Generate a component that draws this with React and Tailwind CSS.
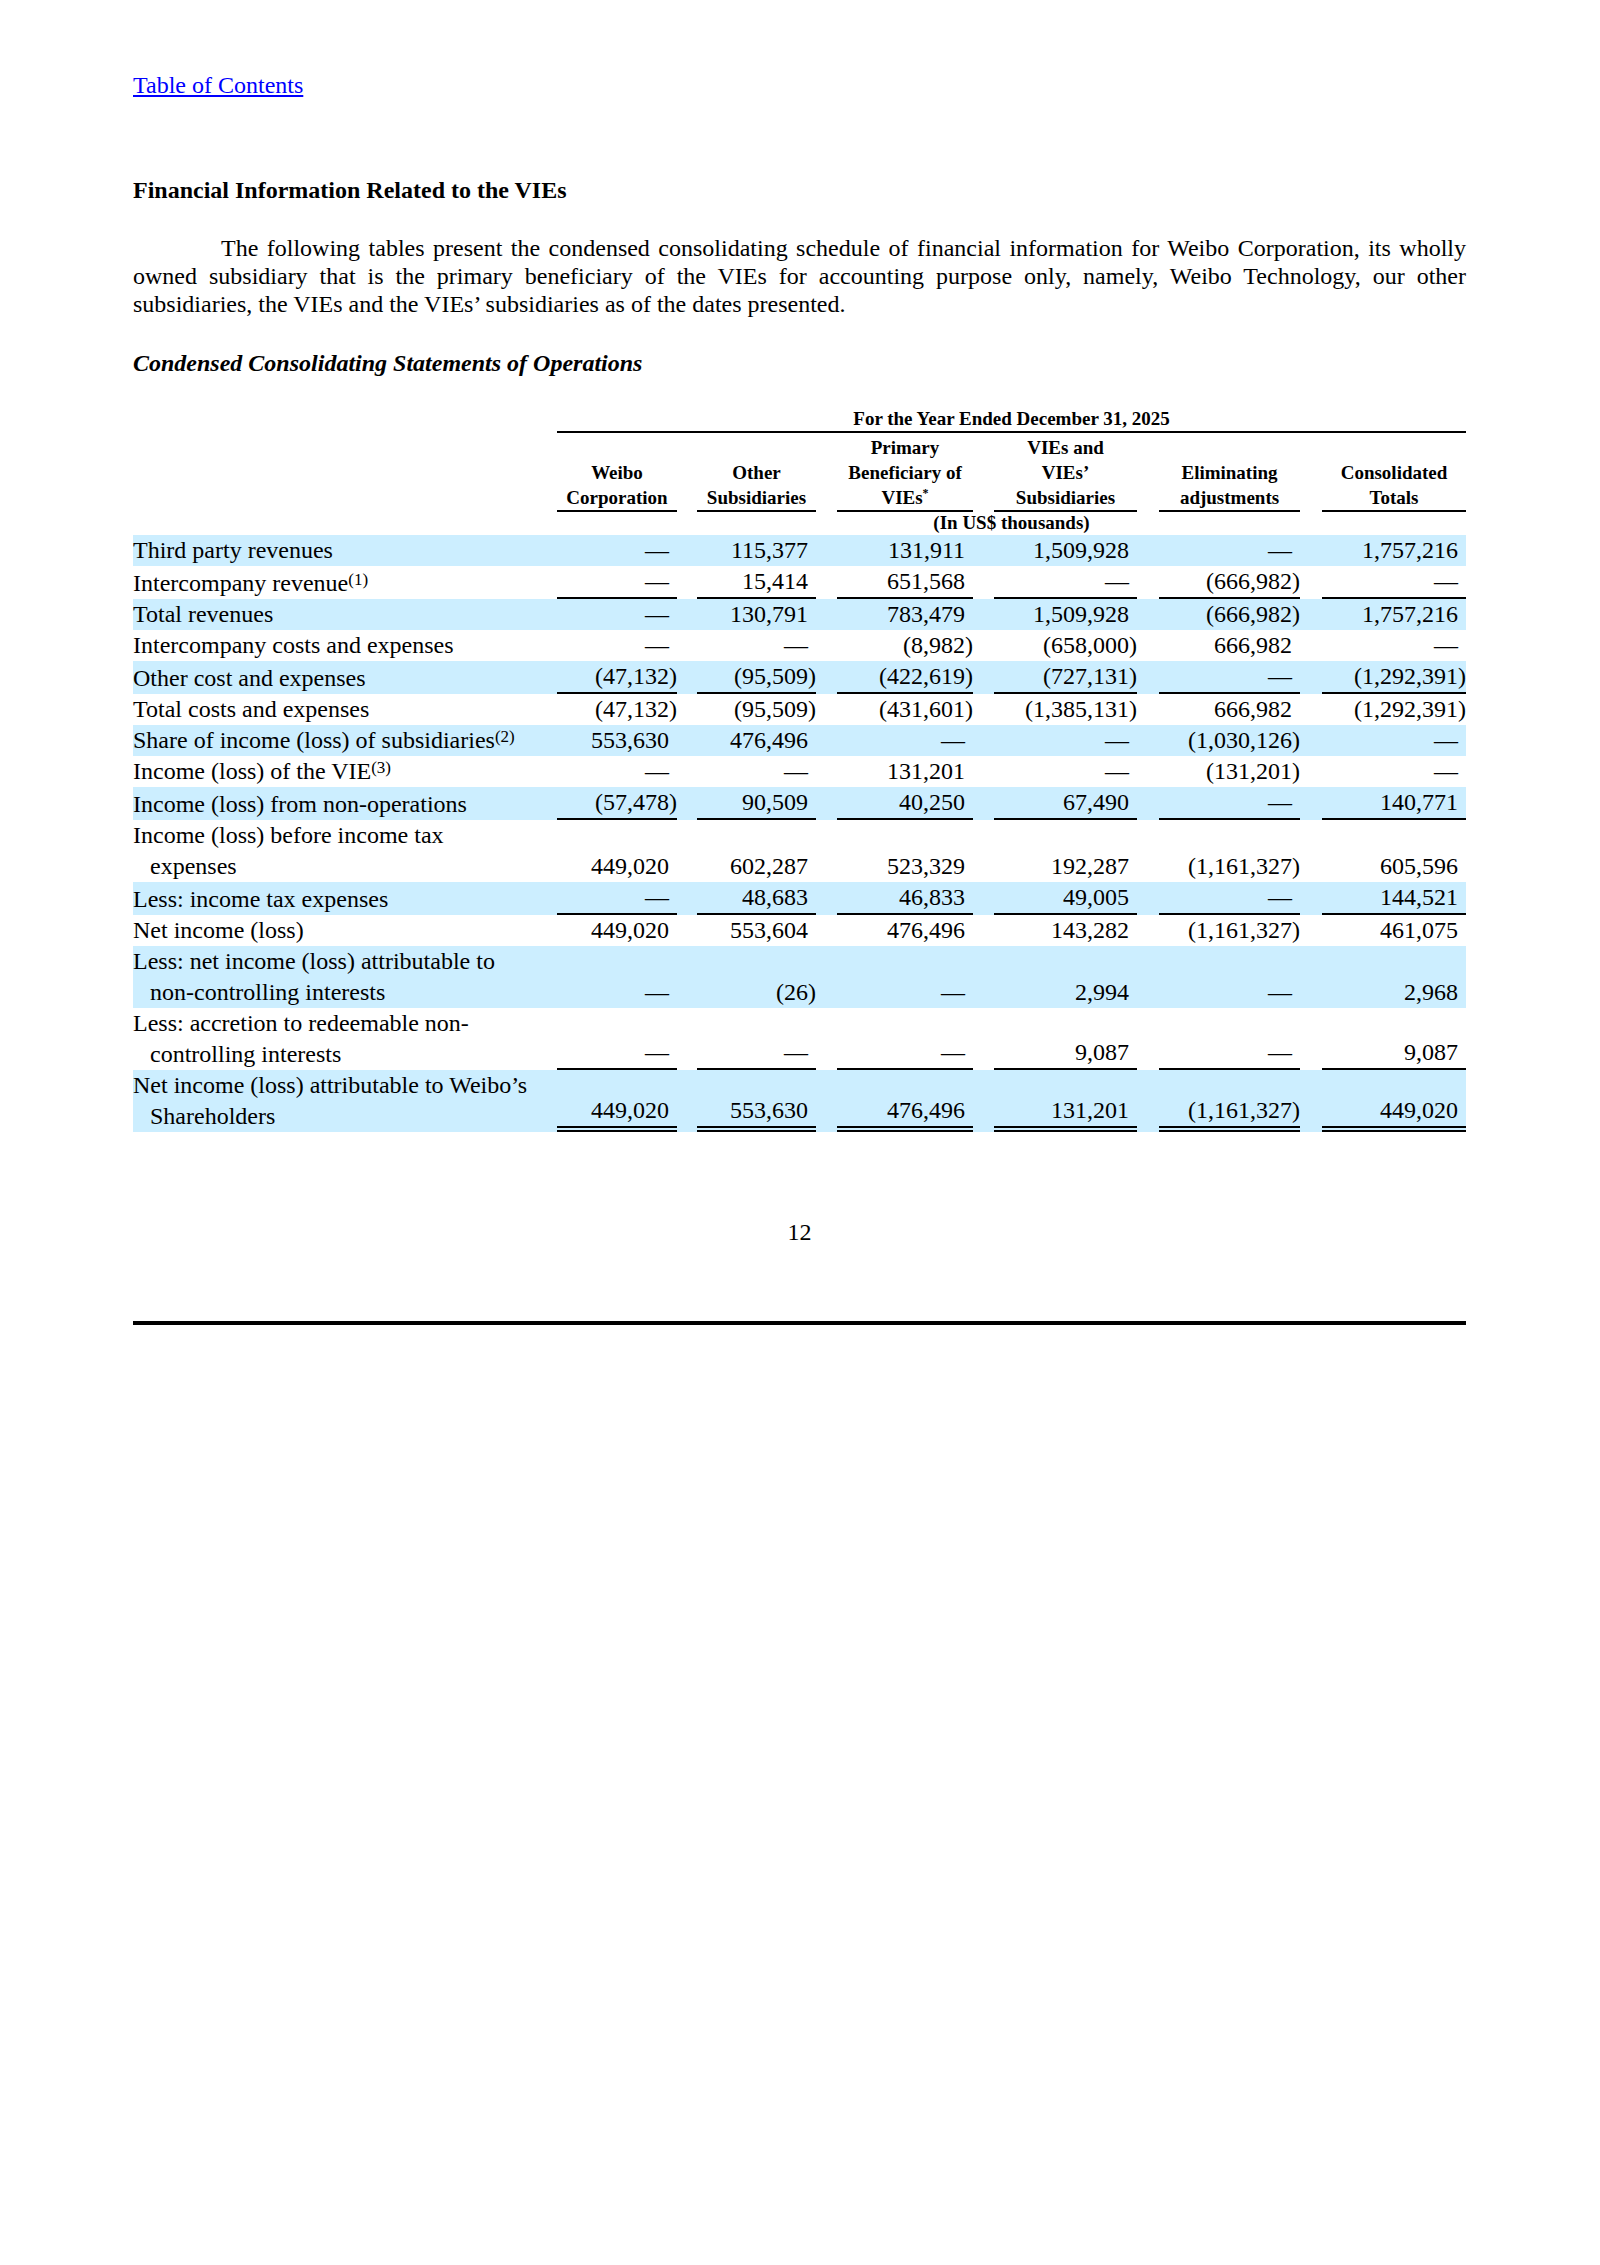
import React from 'react';

const numWidths = ['w-[120px]', 'w-[119px]', 'w-[136px]', 'w-[143px]', 'w-[141px]', 'w-[144px]'];
const gapWidths = ['w-[20px]', 'w-[21px]', 'w-[21px]', 'w-[22px]', 'w-[22px]'];

const headers = [
    ['Weibo', 'Corporation'],
    ['Other', 'Subsidiaries'],
    ['Primary', 'Beneficiary of', 'VIEs*'],
    ['VIEs and', 'VIEs’', 'Subsidiaries'],
    ['Eliminating', 'adjustments'],
    ['Consolidated', 'Totals'],
];

const rows = [
    { label: ['Third party revenues'], band: true, v: ['—', '115,377', '131,911', '1,509,928', '—', '1,757,216'] },
    { label: ['Intercompany revenue'], sup: '(1)', line: 'single', v: ['—', '15,414', '651,568', '—', '(666,982)', '—'] },
    { label: ['Total revenues'], band: true, v: ['—', '130,791', '783,479', '1,509,928', '(666,982)', '1,757,216'] },
    { label: ['Intercompany costs and expenses'], v: ['—', '—', '(8,982)', '(658,000)', '666,982', '—'] },
    { label: ['Other cost and expenses'], band: true, line: 'single', v: ['(47,132)', '(95,509)', '(422,619)', '(727,131)', '—', '(1,292,391)'] },
    { label: ['Total costs and expenses'], v: ['(47,132)', '(95,509)', '(431,601)', '(1,385,131)', '666,982', '(1,292,391)'] },
    { label: ['Share of income (loss) of subsidiaries'], sup: '(2)', band: true, v: ['553,630', '476,496', '—', '—', '(1,030,126)', '—'] },
    { label: ['Income (loss) of the VIE'], sup: '(3)', v: ['—', '—', '131,201', '—', '(131,201)', '—'] },
    { label: ['Income (loss) from non-operations'], band: true, line: 'single', v: ['(57,478)', '90,509', '40,250', '67,490', '—', '140,771'] },
    { label: ['Income (loss) before income tax', 'expenses'], v: ['449,020', '602,287', '523,329', '192,287', '(1,161,327)', '605,596'] },
    { label: ['Less: income tax expenses'], band: true, line: 'single', v: ['—', '48,683', '46,833', '49,005', '—', '144,521'] },
    { label: ['Net income (loss)'], v: ['449,020', '553,604', '476,496', '143,282', '(1,161,327)', '461,075'] },
    { label: ['Less: net income (loss) attributable to', 'non-controlling interests'], band: true, v: ['—', '(26)', '—', '2,994', '—', '2,968'] },
    { label: ['Less: accretion to redeemable non-', 'controlling interests'], line: 'single', v: ['—', '—', '—', '9,087', '—', '9,087'] },
    { label: ['Net income (loss) attributable to Weibo’s', 'Shareholders'], band: true, line: 'double', v: ['449,020', '553,630', '476,496', '131,201', '(1,161,327)', '449,020'] },
];

function Row({ r }) {
    const lineCls = r.line === 'single'
        ? 'border-b-2 border-black'
        : r.line === 'double'
            ? 'border-b-[6px] border-double border-black'
            : '';
    const cells = [];
    r.v.forEach((val, i) => {
        if (i > 0) cells.push(<td key={`g${i}`} />);
        const paren = val.endsWith(')');
        cells.push(
            <td key={`v${i}`} className={`text-right align-bottom whitespace-nowrap ${lineCls} ${paren ? '' : 'pr-[8px]'}`}>
                {val}
            </td>
        );
    });
    return (
        <tr className={r.band ? 'bg-[#cceeff]' : ''}>
            <td className="align-bottom pl-[17px] indent-[-17px]">
                {r.label.map((l, i) => (
                    <React.Fragment key={i}>
                        {i > 0 && <br />}
                        {l}
                        {i === r.label.length - 1 && r.sup && (
                            <sup className="text-[17px] -top-[6px]">{r.sup}</sup>
                        )}
                    </React.Fragment>
                ))}
            </td>
            {cells}
        </tr>
    );
}

export default function App() {
    return (
        <div className="min-h-[2265px] bg-white text-black font-['Liberation_Serif','Times_New_Roman',serif] text-[24px] leading-[normal] pl-[133px] pt-[72px]">
            <div className="w-[1333px]">
                <a href="#toc" className="text-[#0000ff] underline">Table of Contents</a>

                <h2 className="mt-[78px] font-bold">Financial Information Related to the VIEs</h2>

                <p className="mt-[30px] text-justify indent-[88px] leading-[28.2px]">
                    The following tables present the condensed consolidating schedule of financial information for Weibo Corporation, its wholly owned subsidiary that is the primary beneficiary of the VIEs for accounting purpose only, namely, Weibo Technology, our other subsidiaries, the VIEs and the VIEs’ subsidiaries as of the dates presented.
                </p>

                <h3 className="mt-[31px] font-bold italic">Condensed Consolidating Statements of Operations</h3>

                <table className="mt-[29px] w-[1333px] table-fixed border-separate border-spacing-0 leading-[31px]">
                    <colgroup>
                        <col className="w-[424px]" />
                        {numWidths.map((w, i) => (
                            <React.Fragment key={i}>
                                {i > 0 && <col className={gapWidths[i - 1]} />}
                                <col className={w} />
                            </React.Fragment>
                        ))}
                    </colgroup>
                    <thead className="text-[19px] font-bold">
                        <tr className="leading-[25px]">
                            <th />
                            <th colSpan={11} className="text-center border-b-2 border-black">
                                For the Year Ended December 31, 2025
                            </th>
                        </tr>
                        <tr className="leading-[25px]">
                            <th />
                            {headers.map((h, i) => (
                                <React.Fragment key={i}>
                                    {i > 0 && <th />}
                                    <th className="text-center align-bottom border-b-2 border-black pt-[2px]">
                                        {h.map((line, j) => (
                                            <React.Fragment key={j}>
                                                {j > 0 && <br />}
                                                {line.endsWith('*') ? (
                                                    <>
                                                        {line.slice(0, -1)}
                                                        <sup className="text-[12px] -top-[7px]">*</sup>
                                                    </>
                                                ) : line}
                                            </React.Fragment>
                                        ))}
                                    </th>
                                </React.Fragment>
                            ))}
                        </tr>
                        <tr className="leading-[22px]">
                            <th />
                            <th colSpan={11} className="text-center pb-[1px]">(In US$ thousands)</th>
                        </tr>
                    </thead>
                    <tbody>
                        {rows.map((r, i) => <Row key={i} r={r} />)}
                    </tbody>
                </table>

                <div className="mt-[87px] text-center">12</div>

                <div className="mt-[75px] h-[4px] bg-black" />
            </div>
        </div>
    );
}
